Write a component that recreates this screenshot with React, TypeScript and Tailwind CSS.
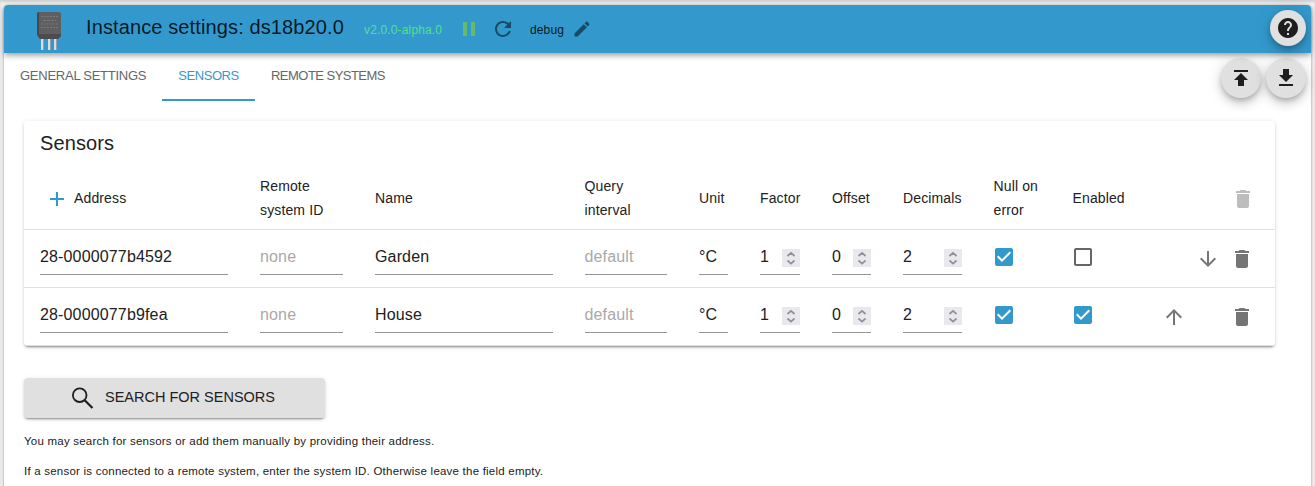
import React from "react";

const icons = {
  pause: "M6 19h4V5H6v14zm8-14v14h4V5h-4z",
  refresh:
    "M17.65 6.35C16.2 4.9 14.21 4 12 4c-4.42 0-7.99 3.58-7.99 8s3.57 8 7.99 8c3.73 0 6.84-2.55 7.73-6h-2.08c-.82 2.33-3.04 4-5.65 4-3.31 0-6-2.69-6-6s2.69-6 6-6c1.66 0 3.14.69 4.22 1.78L13 11h7V4l-2.35 2.35z",
  edit: "M3 17.25V21h3.75L17.81 9.94l-3.75-3.75L3 17.25zM20.71 7.04c.39-.39.39-1.02 0-1.41l-2.34-2.34c-.39-.39-1.02-.39-1.41 0l-1.83 1.83 3.75 3.75 1.83-1.83z",
  help: "M12 2C6.48 2 2 6.48 2 12s4.48 10 10 10 10-4.48 10-10S17.52 2 12 2zm1 17h-2v-2h2v2zm2.07-7.75l-.9.92C13.45 12.9 13 13.5 13 15h-2v-.5c0-1.1.45-2.1 1.17-2.83l1.24-1.26c.37-.36.59-.86.59-1.41 0-1.1-.9-2-2-2s-2 .9-2 2H8c0-2.21 1.79-4 4-4s4 1.79 4 4c0 .88-.36 1.68-.93 2.25z",
  upload: "M5 4v2h14V4H5zm0 10h4v6h6v-6h4l-7-7-7 7z",
  download: "M19 9h-4V3H9v6H5l7 7 7-7zM5 18v2h14v-2H5z",
  add: "M19 13h-6v6h-2v-6H5v-2h6V5h2v6h6v2z",
  trash: "M6 19c0 1.1.9 2 2 2h8c1.1 0 2-.9 2-2V7H6v12zM19 4h-3.5l-1-1h-5l-1 1H5v2h14V4z",
  down: "M20 12l-1.41-1.41L13 16.17V4h-2v12.17l-5.58-5.59L4 12l8 8 8-8z",
  up: "M4 12l1.41 1.41L11 7.83V20h2V7.83l5.58 5.59L20 12l-8-8-8 8z",
  checked:
    "M19 3H5c-1.11 0-2 .9-2 2v14c0 1.1.89 2 2 2h14c1.11 0 2-.9 2-2V5c0-1.1-.89-2-2-2zm-9 14l-5-5 1.41-1.41L10 14.17l7.59-7.59L19 8l-9 9z",
  unchecked:
    "M19 5v14H5V5h14m0-2H5c-1.1 0-2 .9-2 2v14c0 1.1.9 2 2 2h14c1.1 0 2-.9 2-2V5c0-1.1-.9-2-2-2z",
};

function Icon({ name, className }: { name: keyof typeof icons; className?: string }) {
  return (
    <svg viewBox="0 0 24 24" fill="currentColor" className={`shrink-0 ${className ?? "size-6"}`}>
      <path d={icons[name]} />
    </svg>
  );
}

function SensorLogo() {
  return (
    <svg viewBox="0 0 26 40" className="mt-1 h-10 w-[26px] shrink-0">
      <path d="M5 25h3v14H5zM12 25h3v14h-3zM18 25h3v14h-3z" fill="#d9dde0" />
      <path d="M7 25h1v14H7zM14 25h1v14h-1zM20 25h1v14h-1z" fill="#8fa3af" />
      <path d="M1 2l2-1h20l2 1v23l-3 3H4l-3-4z" fill="#5f5f61" />
      <path d="M1 2l2-1v22l-2 1z" fill="#48484a" />
      <path d="M3 23h22v2l-3 3H4l-3-4z" fill="#4c4c4e" />
      <g stroke="#77777a" fill="none">
        <path d="M5 5.5h17" strokeDasharray="2 1" />
        <path d="M7 9.5h13" strokeDasharray="3 1" />
        <path d="M5 13h17" strokeDasharray="2 1 1 1" />
        <path d="M5 16.5h17" strokeDasharray="2 1" />
      </g>
    </svg>
  );
}

const cols =
  "grid grid-cols-[220px_115px_209.5px_114.5px_61px_72px_71px_90.5px_79px_84px_1fr] items-center";

function Field({ value, placeholder }: { value?: string; placeholder?: string }) {
  return (
    <div className="px-4">
      <div className="h-[33px] border-b border-[#949494] pt-[3px] text-base leading-[23px] tracking-[0.15px]">
        {value ? <span>{value}</span> : <span className="text-[#a9a9a9]">{placeholder}</span>}
      </div>
    </div>
  );
}

function NumberField({ value }: { value: string }) {
  return (
    <div className="px-4">
      <div className="flex h-[33px] justify-between border-b border-[#949494] pt-[3px] text-base leading-[23px] tracking-[0.15px]">
        <span>{value}</span>
        <span className="mt-1 flex h-[18px] w-[18px] items-center justify-center bg-[#e9e9ed]">
          <svg viewBox="0 0 18 18" className="size-[18px]" fill="none" stroke="#8f8f9d" strokeWidth="1.7">
            <path d="M5.500 7L9 3.800 12.500 7M5.500 11.500L9 14.700 12.500 11.500" />
          </svg>
        </span>
      </div>
    </div>
  );
}

function Check({ on }: { on: boolean }) {
  return (
    <div className="pb-[3px] pl-[14.5px]">
      <Icon
        name={on ? "checked" : "unchecked"}
        className={on ? "size-6 text-[#3399cc]" : "size-6 text-[#666666]"}
      />
    </div>
  );
}

type Sensor = { address: string; name: string; nullOnError: boolean; enabled: boolean };

const sensors: Sensor[] = [
  { address: "28-0000077b4592", name: "Garden", nullOnError: true, enabled: false },
  { address: "28-0000077b9fea", name: "House", nullOnError: true, enabled: true },
];

function SensorRow({ sensor, first, last }: { sensor: Sensor; first: boolean; last: boolean }) {
  return (
    <div className={`${cols} h-[58px] border-b border-[#e0e0e0]`}>
      <Field value={sensor.address} />
      <Field placeholder="none" />
      <Field value={sensor.name} />
      <Field placeholder="default" />
      <Field value="°C" />
      <NumberField value="1" />
      <NumberField value="0" />
      <NumberField value="2" />
      <Check on={sensor.nullOnError} />
      <Check on={sensor.enabled} />
      <div className="flex items-center gap-2.5 pt-px pl-[21px] text-[#757575]">
        {first ? <span className="size-6" /> : <Icon name="up" />}
        {last ? <span className="size-6" /> : <Icon name="down" />}
        <Icon name="trash" />
      </div>
    </div>
  );
}

const raised =
  "shadow-[0_3px_5px_-1px_rgba(0,0,0,0.2),0_6px_10px_0_rgba(0,0,0,0.14),0_1px_18px_0_rgba(0,0,0,0.12)]";
const paper =
  "shadow-[0_3px_1px_-2px_rgba(0,0,0,0.2),0_2px_2px_0_rgba(0,0,0,0.14),0_1px_5px_0_rgba(0,0,0,0.12)]";

function RoundButton({ icon, size }: { icon: "help" | "upload" | "download"; size: string }) {
  return (
    <button
      className={`flex ${size} shrink-0 items-center justify-center rounded-full bg-[#e0e0e0] text-[#1e1e1e] ${raised}`}
    >
      <Icon name={icon} />
    </button>
  );
}

function Header() {
  return (
    <header className="relative flex h-12 items-center rounded-t bg-[#3399cc] pr-[5px] pl-8 text-black/85 shadow-[0_2px_4px_-1px_rgba(0,0,0,0.2),0_4px_5px_0_rgba(0,0,0,0.14),0_1px_10px_0_rgba(0,0,0,0.12)]">
      <SensorLogo />
      <h1 className="ml-6 w-[278px] pb-1 text-xl leading-8 tracking-[0.12px] whitespace-nowrap">
        Instance settings: ds18b20.0
      </h1>
      <span className="w-[93px] pt-0.5 text-xs tracking-[0.15px] whitespace-nowrap text-[#50e08c]">
        v2.0.0-alpha.0
      </span>
      <Icon name="pause" className="size-6 text-[#66bb6a]" />
      <Icon name="refresh" className="ml-2.5 size-6 text-[#1a4a63]" />
      <span className="ml-[15px] pt-0.5 text-xs tracking-[0.13px]">debug</span>
      <Icon name="edit" className="ml-2 size-5 text-[#1a4a63]" />
      <div className="ml-auto pb-0.5">
        <RoundButton icon="help" size="size-9" />
      </div>
    </header>
  );
}

function Tabs() {
  return (
    <div className="flex h-12 text-[13px] leading-[46px] text-[#666666]">
      <div className="w-[158px] pl-4 tracking-[-0.25px] whitespace-nowrap">GENERAL SETTINGS</div>
      <div className="w-[93px] border-b-2 border-[#3399cc] text-center tracking-[-0.45px] text-[#3399cc]">
        SENSORS
      </div>
      <div className="pl-4 tracking-[-0.53px] whitespace-nowrap">REMOTE SYSTEMS</div>
      <div className="mt-[5px] mr-[5px] ml-auto flex gap-[5px]">
        <RoundButton icon="upload" size="size-10" />
        <RoundButton icon="download" size="size-10" />
      </div>
    </div>
  );
}

export default function App() {
  return (
    <div className="h-[486px] overflow-hidden bg-[#f0f0f0] px-1 pt-[5px] font-['Liberation_Sans',Arial,sans-serif] text-[#212121] shadow-[inset_0_2px_2px_rgba(0,0,0,0.12)]">
      <div className="h-[500px] w-[1307px] rounded-t bg-white shadow-[0_1px_3px_rgba(0,0,0,0.4)]">
        <Header />
        <Tabs />
        <main className="px-5 pt-5">
          <section className={`h-[225px] w-[1251px] rounded bg-white ${paper}`}>
            <h2 className="h-11 pt-1.5 pl-4 text-xl leading-8 tracking-[0.1px]">Sensors</h2>
            <div className={`${cols} h-[65px] border-b border-[#e0e0e0] pt-0.5 text-sm leading-6 tracking-[0.13px]`}>
              <div className="flex items-center pl-[21px]">
                <Icon name="add" className="mt-0.5 size-6 text-[#3399cc]" />
                <span className="pl-[5px]">Address</span>
              </div>
              <div className="pl-4">
                Remote
                <br />
                system ID
              </div>
              <div className="pl-4">Name</div>
              <div className="pl-4">
                Query
                <br />
                interval
              </div>
              <div className="pl-4">Unit</div>
              <div className="pl-4">Factor</div>
              <div className="pl-4">Offset</div>
              <div className="pl-4">Decimals</div>
              <div className="pl-4">
                Null on
                <br />
                error
              </div>
              <div className="pl-4">Enabled</div>
              <div className="flex pt-0.5 pl-[90px] text-[#bdbdbd]">
                <Icon name="trash" />
              </div>
            </div>
            {sensors.map((sensor, i) => (
              <SensorRow
                key={sensor.address}
                sensor={sensor}
                first={i === 0}
                last={i === sensors.length - 1}
              />
            ))}
          </section>
          <button
            className={`mt-8 flex h-10 w-[301px] items-center rounded bg-[#e0e0e0] pl-[46px] text-[14.5px] ${paper}`}
          >
            <svg viewBox="0 0 24 24" className="size-6 shrink-0" fill="none" stroke="#1e1e1e" strokeWidth="1.8">
              <circle cx="9.700" cy="9.200" r="6.800" />
              <path d="M14.700 14.200L22.500 22" strokeWidth="2.200" />
            </svg>
            <span className="pb-px pl-[11px] whitespace-nowrap">SEARCH FOR SENSORS</span>
          </button>
          <p className="mt-[15px] text-[11.5px] leading-4 tracking-[0.22px]">
            You may search for sensors or add them manually by providing their address.
          </p>
          <p className="mt-3.5 text-[11.5px] leading-4 tracking-[0.22px]">
            If a sensor is connected to a remote system, enter the system ID. Otherwise leave the field empty.
          </p>
        </main>
      </div>
    </div>
  );
}
